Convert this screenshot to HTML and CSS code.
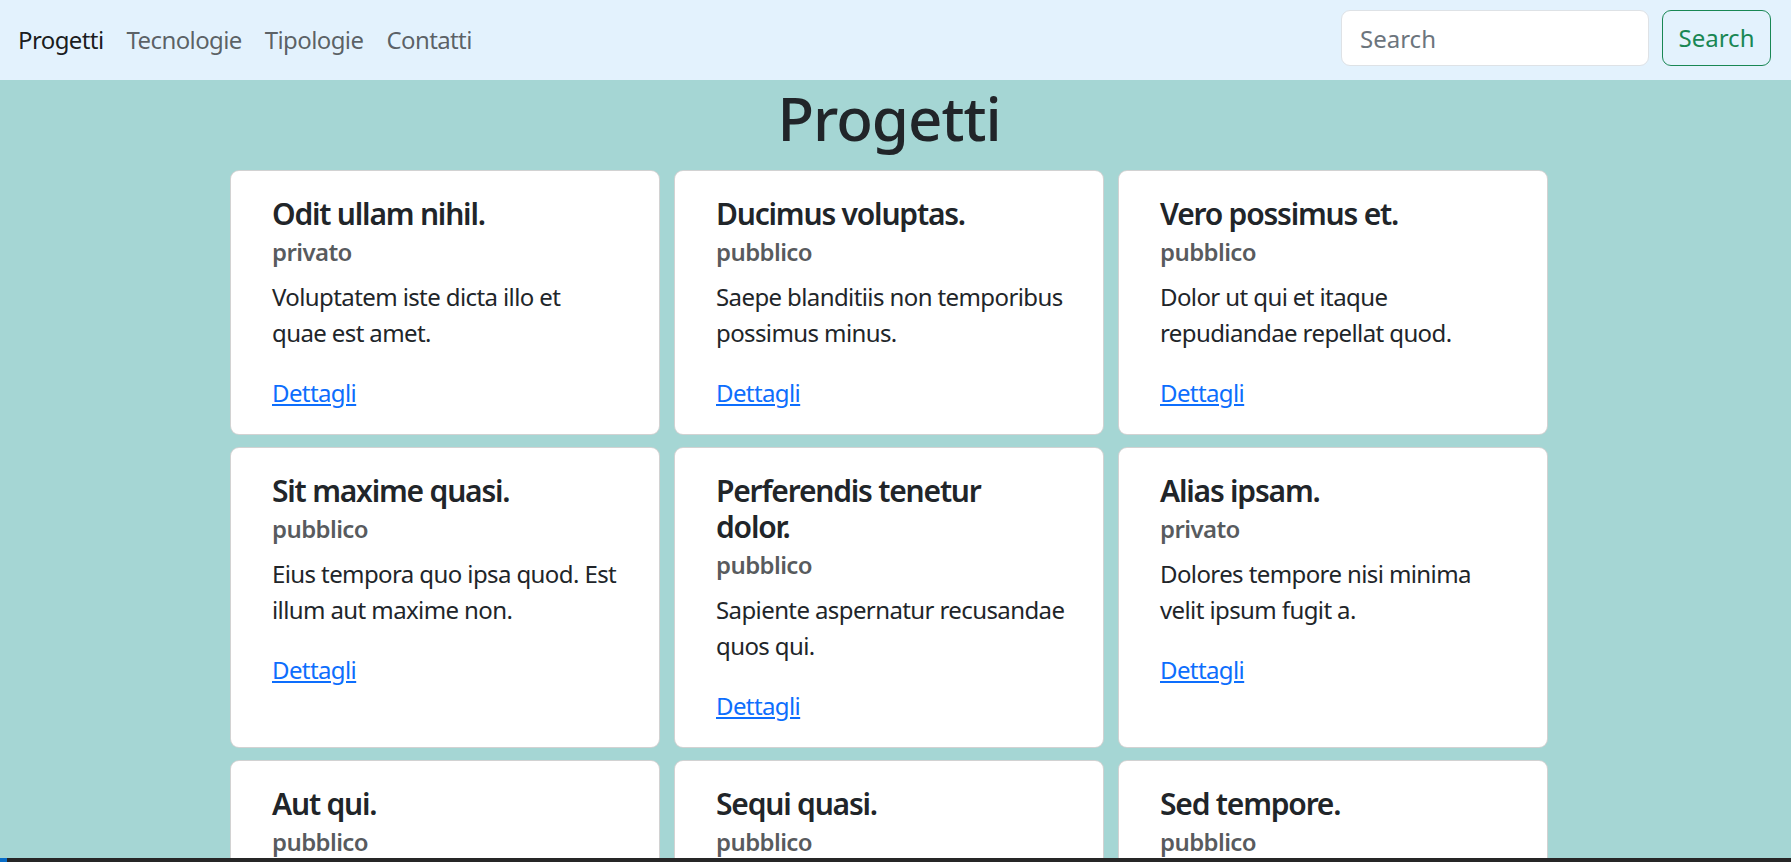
FILE: index.html
```html
<!DOCTYPE html>
<html lang="it">
<head>
<meta charset="utf-8">
<title>Progetti</title>
<link rel="stylesheet" href="styles.css">
</head>
<body>
<nav class="navbar">
  <ul class="nav-links">
    <li><a class="nav-link active" href="#">Progetti</a></li>
    <li><a class="nav-link" href="#">Tecnologie</a></li>
    <li><a class="nav-link" href="#">Tipologie</a></li>
    <li><a class="nav-link" href="#">Contatti</a></li>
  </ul>
  <form class="search">
    <input class="search-input" type="search" placeholder="Search">
    <button class="search-btn" type="button">Search</button>
  </form>
</nav>
<main class="main">
  <h1 class="page-title">Progetti</h1>
  <div class="grid">
    <div class="card">
      <h5 class="card-title">Odit ullam nihil.</h5>
      <h6 class="card-subtitle">privato</h6>
      <p class="card-text">Voluptatem iste dicta illo et <span class="nowrap">quae est</span> amet.</p>
      <a class="card-link" href="#">Dettagli</a>
    </div>
    <div class="card">
      <h5 class="card-title">Ducimus voluptas.</h5>
      <h6 class="card-subtitle">pubblico</h6>
      <p class="card-text">Saepe blanditiis non temporibus possimus minus.</p>
      <a class="card-link" href="#">Dettagli</a>
    </div>
    <div class="card">
      <h5 class="card-title">Vero possimus et.</h5>
      <h6 class="card-subtitle">pubblico</h6>
      <p class="card-text">Dolor ut qui et itaque repudiandae repellat quod.</p>
      <a class="card-link" href="#">Dettagli</a>
    </div>
    <div class="card">
      <h5 class="card-title">Sit maxime quasi.</h5>
      <h6 class="card-subtitle">pubblico</h6>
      <p class="card-text">Eius tempora quo ipsa quod. Est illum aut maxime non.</p>
      <a class="card-link" href="#">Dettagli</a>
    </div>
    <div class="card">
      <h5 class="card-title">Perferendis tenetur dolor.</h5>
      <h6 class="card-subtitle">pubblico</h6>
      <p class="card-text">Sapiente aspernatur recusandae quos qui.</p>
      <a class="card-link" href="#">Dettagli</a>
    </div>
    <div class="card">
      <h5 class="card-title">Alias ipsam.</h5>
      <h6 class="card-subtitle">privato</h6>
      <p class="card-text">Dolores tempore nisi minima velit ipsum fugit a.</p>
      <a class="card-link" href="#">Dettagli</a>
    </div>
    <div class="card">
      <h5 class="card-title">Aut qui.</h5>
      <h6 class="card-subtitle">pubblico</h6>
      <p class="card-text">Quia nostrum dolores ut voluptatem aut.</p>
      <a class="card-link" href="#">Dettagli</a>
    </div>
    <div class="card">
      <h5 class="card-title">Sequi quasi.</h5>
      <h6 class="card-subtitle">pubblico</h6>
      <p class="card-text">Et sint quis rerum ea eius odio.</p>
      <a class="card-link" href="#">Dettagli</a>
    </div>
    <div class="card">
      <h5 class="card-title">Sed tempore.</h5>
      <h6 class="card-subtitle">pubblico</h6>
      <p class="card-text">Ut nemo facere ipsam magni aut sit.</p>
      <a class="card-link" href="#">Dettagli</a>
    </div>
  </div>
</main>
<div class="taskbar"><span class="taskbar-start"></span></div>
</body>
</html>
```

FILE: styles.css
```css
* { box-sizing: border-box; }

html, body {
  margin: 0;
  padding: 0;
}

body {
  background: #a5d6d4;
  color: #212529;
  font-family: "Noto Sans", "Open Sans", sans-serif;
  font-size: 24px;
  line-height: 1.5;
  letter-spacing: -0.6px;
}

.navbar {
  height: 80px;
  background: #e3f2fd;
  display: flex;
  align-items: center;
  justify-content: space-between;
  padding: 0 20px 0 18px;
}

.nav-links {
  list-style: none;
  margin: 0;
  padding: 0;
  display: flex;
  gap: 23px;
}

.nav-link {
  color: rgba(0, 0, 0, 0.62);
  text-decoration: none;
  font-size: 24px;
  line-height: 36px;
}

.nav-link.active {
  color: rgba(0, 0, 0, 0.9);
}

.search {
  display: flex;
  gap: 13px;
  margin: 0 0 4px;
}

.search-input {
  width: 308px;
  height: 56px;
  border: 1px solid #dee2e6;
  border-radius: 9px;
  background: #fff;
  padding: 0 18px;
  font: inherit;
  font-size: 24px;
  color: #212529;
  outline: none;
}

.search-input::placeholder {
  color: #6c757d;
}

.search-btn {
  width: 109px;
  height: 56px;
  border: 1px solid #198754;
  border-radius: 9px;
  background: transparent;
  color: #198754;
  font: inherit;
  font-size: 24px;
  padding: 0;
  cursor: pointer;
}

.main {
  padding-right: 13px;
}

.page-title {
  margin: 2px 0 16px;
  text-align: center;
  font-size: 60px;
  font-weight: 500;
  line-height: 72px;
  letter-spacing: -1px;
}

.grid {
  display: grid;
  grid-template-columns: repeat(3, 430px);
  column-gap: 14px;
  row-gap: 12px;
  justify-content: center;
}

.card {
  background: #fff;
  border: 1px solid rgba(0, 0, 0, 0.175);
  border-radius: 9px;
  padding: 25px 29px 23px 41px;
}

.card-title {
  margin: 0 0 12px;
  font-size: 30px;
  font-weight: 600;
  line-height: 36px;
  letter-spacing: -1.2px;
  max-width: 330px;
}

.card-subtitle {
  margin: -6px 0 12px;
  font-size: 24px;
  font-weight: 600;
  line-height: 28.8px;
  color: rgba(33, 37, 41, 0.75);
}

.card-text {
  margin: 0 0 24px;
}

.nowrap {
  white-space: nowrap;
}

.card-link {
  color: #0d6efd;
  text-decoration: underline;
}

.taskbar {
  position: fixed;
  left: 0;
  right: 0;
  bottom: 0;
  height: 4px;
  background: #262626;
}

.taskbar-start {
  display: block;
  width: 7px;
  height: 4px;
  background: #0a6ec7;
}
```
